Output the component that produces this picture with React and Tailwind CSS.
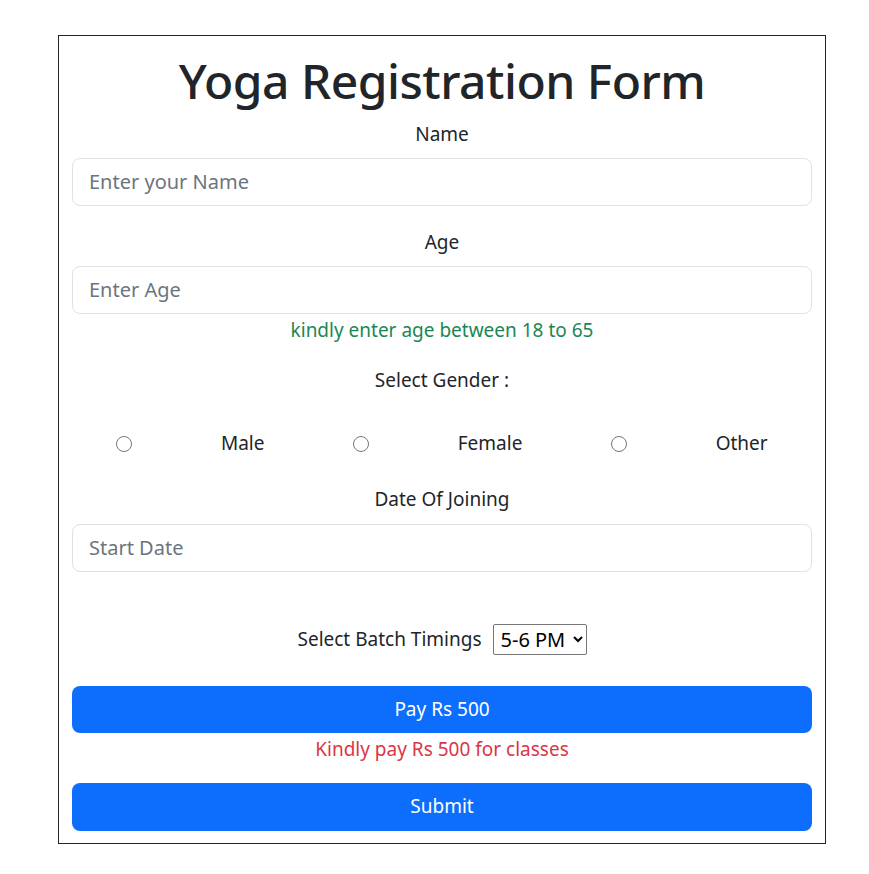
import React from 'react';

const font = { fontFamily: '"Noto Sans", "Open Sans", sans-serif' };

// Campo de texto no estilo form-control-lg
const Field = ({ placeholder }) => (
  <input
    type="text"
    placeholder={placeholder}
    className="block w-full h-[48px] px-4 text-[20px] text-[#212529] placeholder:text-[#6c757d] bg-white border border-[#dee2e6] rounded-[8px] outline-none"
  />
);

export default function App() {
  return (
    <div className="min-h-[874px] bg-white text-[#212529]" style={font}>
      <div className="ml-[58px] w-[768px] mt-[35px] border border-[#212529] px-[13px] pb-[12px] text-center">
        <h1 className="text-[48px] font-medium leading-[1.2] pt-[16px] tracking-[-0.5px]">Yoga Registration Form</h1>

        <label className="block text-[19px] leading-[30px] mt-[9px]">Name</label>
        <div className="mt-[9px]">
          <Field placeholder="Enter your Name" />
        </div>

        <label className="block text-[19px] leading-[30px] mt-[21px]">Age</label>
        <div className="mt-[9px]">
          <Field placeholder="Enter Age" />
        </div>
        <div className="text-[19px] leading-[30px] text-[#198754] mt-[1px]">kindly enter age between 18 to 65</div>

        <div className="text-[19px] leading-[30px] mt-[20px]">Select Gender :</div>

        {/* Opções de gênero */}
        <div className="flex justify-around items-center h-[30px] mt-[34px] text-[19px]">
          <input type="radio" name="gender" className="w-4 h-4 m-0" />
          <span>Male</span>
          <input type="radio" name="gender" className="w-4 h-4 m-0" />
          <span>Female</span>
          <input type="radio" name="gender" className="w-4 h-4 m-0" />
          <span>Other</span>
        </div>

        <label className="block text-[19px] leading-[30px] mt-[25px]">Date Of Joining</label>
        <div className="mt-[10px]">
          <Field placeholder="Start Date" />
        </div>

        <div className="flex justify-center items-center gap-[11px] mt-[52px] h-[31px] text-[19px]">
          <span>Select Batch Timings</span>
          <select className="h-[31px] text-[20px] border border-[#767676] rounded-[2px] bg-white px-[3px] text-black">
            <option>5-6 PM</option>
            <option>6-7 AM</option>
            <option>7-8 AM</option>
            <option>8-9 AM</option>
          </select>
        </div>

        <button className="block w-full h-[47px] mt-[31px] bg-[#0d6efd] text-white text-[19px] rounded-[8px]">Pay Rs 500</button>
        <div className="text-[19px] leading-[30px] text-[#dc3545] mt-[1px]">Kindly pay Rs 500 for classes</div>

        <button className="block w-full h-[48px] mt-[19px] bg-[#0d6efd] text-white text-[19px] rounded-[8px]">Submit</button>
      </div>
    </div>
  );
}
